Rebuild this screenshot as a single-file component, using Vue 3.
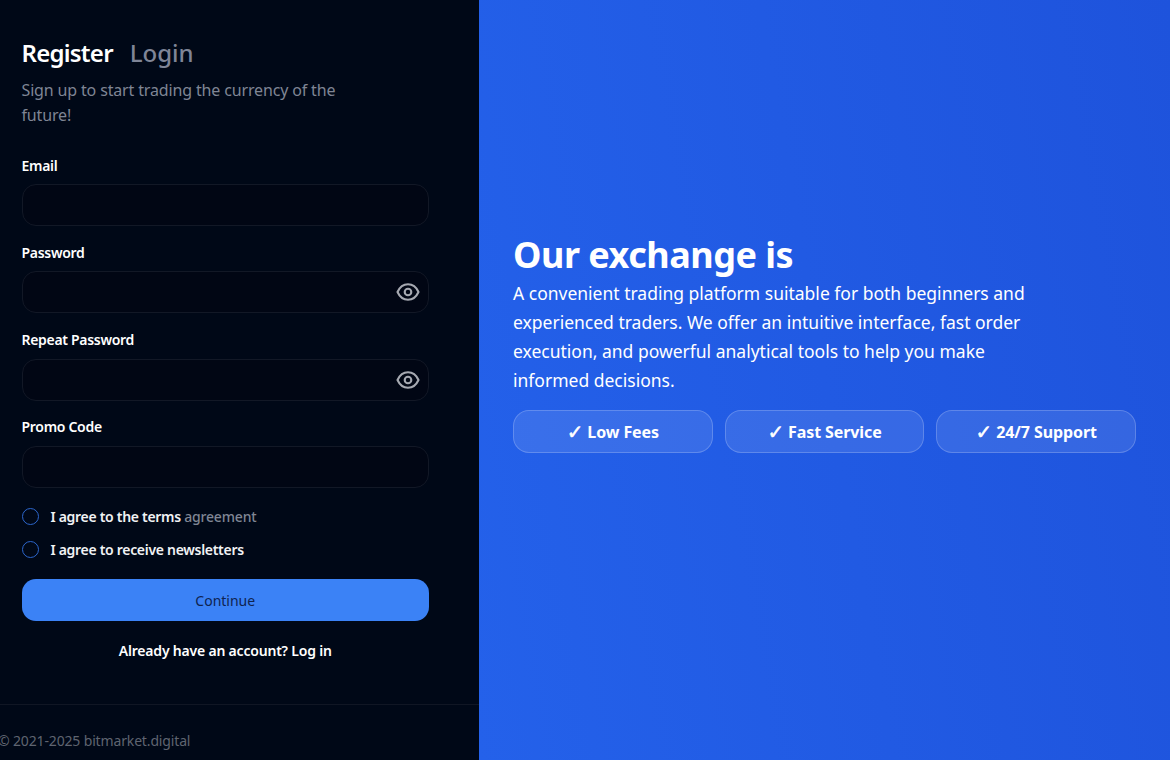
<template>
  <div class="page">
    <section class="left">
      <div class="form-wrap">
        <div class="tabs">
          <span class="tab active">Register</span>
          <span class="tab">Login</span>
        </div>
        <p class="subtitle">Sign up to start trading the currency of the future!</p>

        <div v-for="field in fields" :key="field.label" class="field">
          <label class="label">{{ field.label }}</label>
          <div class="input-box">
            <svg v-if="field.eye" class="eye" viewBox="0 0 24 24" fill="none" stroke="currentColor" stroke-width="2.100" stroke-linecap="round" stroke-linejoin="round">
              <path d="M1.5 12C3.500 7.600 7.300 4.300 12 4.300S20.500 7.600 22.500 12C20.500 16.400 16.700 19.700 12 19.700S3.500 16.400 1.500 12z"></path>
              <circle cx="12" cy="12" r="3.300"></circle>
            </svg>
          </div>
        </div>

        <div class="check-row first">
          <span class="radio"></span>
          <span class="check-text">I agree to the terms <span class="muted">agreement</span></span>
        </div>
        <div class="check-row">
          <span class="radio"></span>
          <span class="check-text">I agree to receive newsletters</span>
        </div>

        <button class="continue">Continue</button>
        <p class="have-account">Already have an account? Log in</p>
      </div>

      <footer class="footer">
        <span class="copyright">© 2021-2025 bitmarket.digital</span>
      </footer>
    </section>

    <section class="right">
      <h1 class="heading">Our exchange is</h1>
      <p class="desc">A convenient trading platform suitable for both beginners and experienced traders. We offer an intuitive interface, fast order execution, and powerful analytical tools to help you make informed decisions.</p>
      <div class="pills">
        <div v-for="pill in pills" :key="pill" class="pill"><span class="tick">✓</span>{{ pill }}</div>
      </div>
    </section>
  </div>
</template>

<script setup>
const fields = [
  { label: 'Email', eye: false },
  { label: 'Password', eye: true },
  { label: 'Repeat Password', eye: true },
  { label: 'Promo Code', eye: false }
]

const pills = ['Low Fees', 'Fast Service', '24/7 Support']
</script>

<style>
html, body {
  margin: 0;
  overflow: hidden;
  background: #000817;
}
</style>

<style scoped>
.page {
  display: flex;
  width: 1170px;
  height: 760px;
  overflow: hidden;
  font-family: "Noto Sans", "Open Sans", sans-serif;
}

.left {
  width: 479px;
  flex-shrink: 0;
  background: #000817;
  display: flex;
  flex-direction: column;
  color: #fff;
}

.form-wrap {
  flex: 1;
  padding: 34px 50px 0 21.500px;
}

.tabs {
  display: flex;
  gap: 17px;
  height: 36px;
  align-items: center;
}

.tab {
  font-size: 24px;
  font-weight: 500;
  letter-spacing: -0.05px;
  color: #7f8597;
}

.tab.active {
  color: #fff;
  font-weight: 600;
  letter-spacing: -0.75px;
}

.subtitle {
  margin: 8px 0 0;
  width: 340px;
  font-size: 16px;
  line-height: 25px;
  letter-spacing: -0.15px;
  color: #7f8594;
}

.field {
  margin-top: 16.830px;
}

.subtitle + .field {
  margin-top: 27.500px;
}

.label {
  display: block;
  font-size: 14px;
  font-weight: 600;
  line-height: 20px;
  letter-spacing: -0.3px;
  margin-bottom: 8.500px;
}

.input-box {
  box-sizing: border-box;
  height: 42px;
  border: 1px solid #121826;
  border-radius: 14px;
  display: flex;
  align-items: center;
  justify-content: flex-end;
  padding-right: 8px;
  background: #010614;
}

.eye {
  width: 24px;
  height: 24px;
  color: #a6a9b1;
}

.check-row {
  display: flex;
  align-items: center;
  gap: 12px;
  height: 20px;
  margin-top: 13px;
}

.check-row.first {
  margin-top: 19px;
}

.radio {
  box-sizing: border-box;
  width: 17px;
  height: 17px;
  border: 1px solid #2c66cc;
  border-radius: 50%;
}

.check-text {
  font-size: 14px;
  font-weight: 600;
  letter-spacing: -0.3px;
  color: #f1f2f4;
}

.muted {
  color: #7f8594;
  font-weight: 500;
  letter-spacing: -0.16px;
}

.continue {
  display: block;
  width: 100%;
  height: 42px;
  margin-top: 19.500px;
  border: none;
  border-radius: 14px;
  background: #3b82f6;
  color: #0f2350;
  font-family: inherit;
  font-size: 14px;
}

.have-account {
  margin: 20px 0 0;
  text-align: center;
  font-size: 14px;
  font-weight: 600;
  line-height: 20px;
  letter-spacing: -0.2px;
}

.footer {
  box-sizing: border-box;
  height: 56px;
  border-top: 1px solid #101624;
  padding-top: 26px;
}

.copyright {
  display: block;
  margin-left: -2px;
  font-size: 14px;
  line-height: 20px;
  letter-spacing: -0.15px;
  color: #5f6470;
}

.right {
  flex: 1;
  box-sizing: border-box;
  background: linear-gradient(80deg, #2461ea, #1e53dc);
  padding: 0 34px 74px;
  display: flex;
  flex-direction: column;
  justify-content: center;
  color: #fff;
}

.heading {
  margin: 0;
  font-size: 36px;
  font-weight: 700;
  line-height: 44px;
  letter-spacing: -0.5px;
}

.desc {
  margin: 2px 0 0;
  width: 540px;
  font-size: 17.500px;
  line-height: 29px;
}

.pills {
  display: flex;
  gap: 12px;
  margin-top: 15px;
}

.pill {
  flex: 1;
  box-sizing: border-box;
  height: 43px;
  display: flex;
  align-items: center;
  justify-content: center;
  gap: 4px;
  border: 1px solid rgba(255, 255, 255, 0.2);
  border-radius: 16px;
  background: rgba(255, 255, 255, 0.1);
  font-size: 16px;
  font-weight: 700;
  letter-spacing: -0.1px;
}

.tick {
  font-family: "DejaVu Sans", sans-serif;
  font-size: 20px;
  line-height: 20px;
  -webkit-text-stroke: 0.500px #fff;
}
</style>
